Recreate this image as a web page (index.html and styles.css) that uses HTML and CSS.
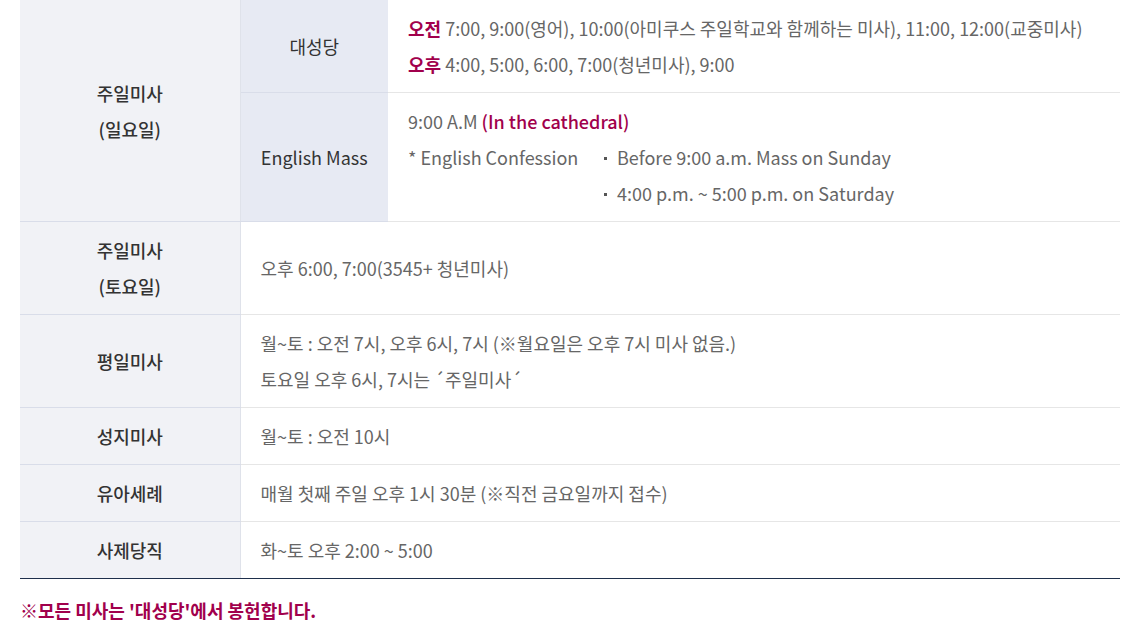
FILE: index.html
```html
<!DOCTYPE html>
<html>
<head>
<meta charset="utf-8">
<title>미사시간</title>
<link rel="stylesheet" href="styles.css">
</head>
<body>
<div class="wrap">
  <table class="mass">
    <colgroup>
      <col class="c1">
      <col class="c2">
      <col>
    </colgroup>
    <tbody>
      <tr>
        <th class="h1" rowspan="2"><span class="ln">주일미사</span><span class="ln">(일요일)</span></th>
        <th class="h2">대성당</th>
        <td>
          <p><b class="red">오전</b> 7:00, 9:00(영어), 10:00(아미쿠스 주일학교와 함께하는 미사), 11:00, 12:00(교중미사)</p>
          <p><b class="red">오후</b> 4:00, 5:00, 6:00, 7:00(청년미사), 9:00</p>
        </td>
      </tr>
      <tr>
        <th class="h2">English Mass</th>
        <td>
          <p>9:00 A.M <b class="red medium">(In the cathedral)</b></p>
          <div class="conf">
            <span class="conf-label">* English Confession</span>
            <ul class="bul">
              <li>Before 9:00 a.m. Mass on Sunday</li>
              <li>4:00 p.m. ~ 5:00 p.m. on Saturday</li>
            </ul>
          </div>
        </td>
      </tr>
      <tr>
        <th class="h1"><span class="ln">주일미사</span><span class="ln">(토요일)</span></th>
        <td colspan="2">오후 6:00, 7:00(3545+ 청년미사)</td>
      </tr>
      <tr>
        <th class="h1">평일미사</th>
        <td colspan="2">
          <p>월~토 : 오전 7시, 오후 6시, 7시 (※월요일은 오후 7시 미사 없음.)</p>
          <p>토요일 오후 6시, 7시는 ´주일미사´</p>
        </td>
      </tr>
      <tr>
        <th class="h1">성지미사</th>
        <td colspan="2">월~토 : 오전 10시</td>
      </tr>
      <tr>
        <th class="h1">유아세례</th>
        <td colspan="2">매월 첫째 주일 오후 1시 30분 (※직전 금요일까지 접수)</td>
      </tr>
      <tr class="last">
        <th class="h1">사제당직</th>
        <td colspan="2">화~토 오후 2:00 ~ 5:00</td>
      </tr>
    </tbody>
  </table>
  <p class="note">※모든 미사는 '대성당'에서 봉헌합니다.</p>
</div>
</body>
</html>
```

FILE: styles.css
```css
html, body {
  margin: 0;
  padding: 0;
  background: #fff;
}
body {
  font-family: "Noto Sans CJK KR", "Noto Sans", sans-serif;
  font-size: 18px;
  line-height: 36px;
  color: #666;
}
.wrap {
  padding: 0 20px;
}
.mass {
  width: 1100px;
  border-collapse: collapse;
  border-top: 1px solid #1e2f4b;
  table-layout: fixed;
  margin-top: -1px;
}
.c1 { width: 220px; }
.c2 { width: 148px; }
.mass th,
.mass td {
  padding: 10px 20px;
  border-bottom: 1px solid #e6e6e6;
  vertical-align: middle;
}
.mass th {
  font-weight: 400;
  color: #333;
  text-align: center;
  border-bottom-color: #d9dde9;
}
.mass .last th,
.mass .last td {
  border-bottom: 1px solid #1e2f4b;
}
.h1 {
  background: #f1f2f6;
  font-weight: 500 !important;
  border-right: 1px solid #dfe2ea;
}
.h2 {
  background: #e7eaf3;
  padding: 10px 0 !important;
}
.ln {
  display: block;
  height: 36px;
}
.mass td {
  text-align: left;
}
.mass p {
  margin: 0;
  height: 36px;
}
.red {
  color: #a1004c;
  font-weight: 700;
}
.red.medium {
  font-weight: 500;
}
.conf {
  display: flex;
}
.conf-label {
  width: 196px;
  flex: none;
}
.bul {
  list-style: none;
  margin: 0;
  padding: 0;
}
.bul li {
  position: relative;
  padding-left: 13px;
  height: 36px;
}
.bul li::before {
  content: "";
  position: absolute;
  left: 0;
  top: 18px;
  width: 3px;
  height: 3px;
  background: #555;
}
.note {
  margin: 13px 0 0;
  color: #a1004c;
  font-weight: 700;
}
```
